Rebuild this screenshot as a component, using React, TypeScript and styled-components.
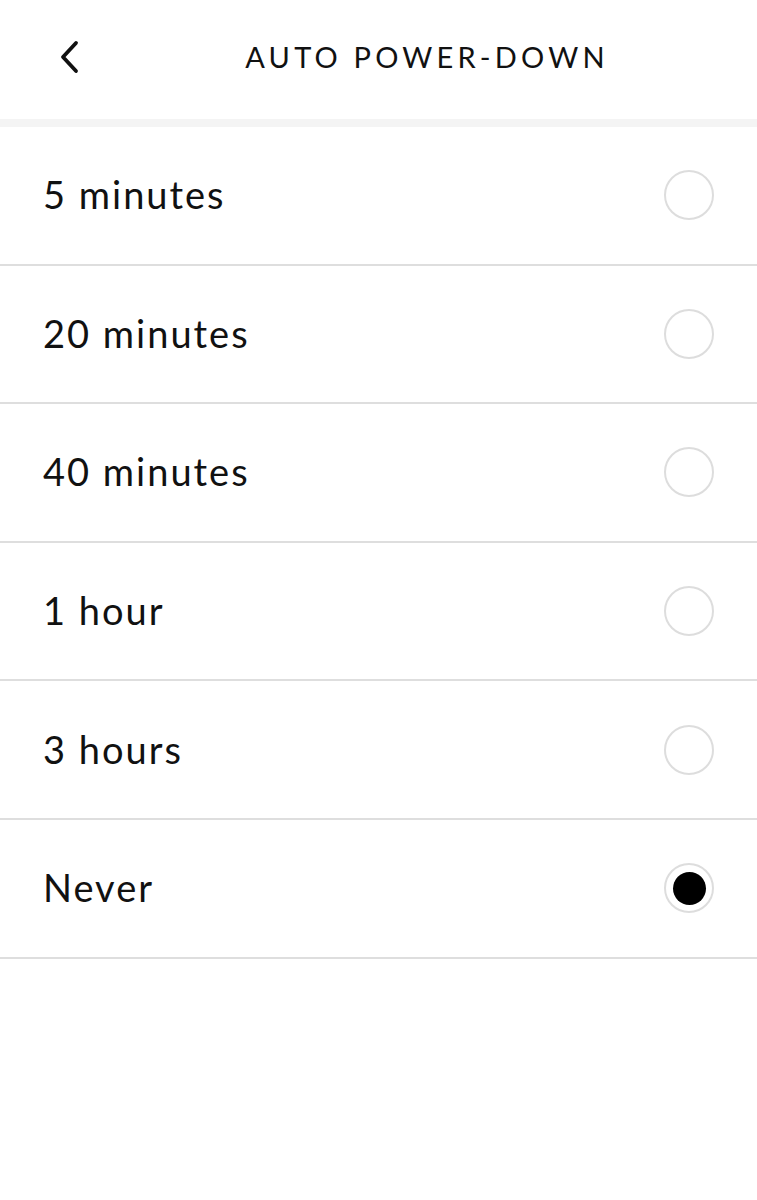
import React, { useState } from "react";
import styled, { createGlobalStyle, css } from "styled-components";

const GlobalStyle = createGlobalStyle`
  html, body {
    margin: 0;
    padding: 0;
    background: #ffffff;
  }

  body {
    font-family: Lato, "Noto Sans", sans-serif;
    color: #111111;
  }
`;

const Screen = styled.div`
  display: flex;
  flex-direction: column;
  width: 757px;
  min-height: 1200px;
  background: #ffffff;
`;

const Header = styled.header`
  display: flex;
  flex-direction: row;
  align-items: center;
  height: 113px;
  padding-bottom: 6px;
  /** thin grey band under the bar */
  border-bottom: 8px solid #f4f4f4;
`;

const BackButton = styled.button`
  display: flex;
  align-items: center;
  justify-content: flex-start;
  flex: none;
  width: 93px;
  height: 60px;
  margin: 0;
  padding: 0 0 0 58px;
  border: none;
  background: transparent;
  color: #111111;
  cursor: pointer;
`;

const Title = styled.h1`
  flex: 1;
  margin: 0 0 0 4px;
  text-align: center;
  font-size: 29px;
  font-weight: 400;
  letter-spacing: 4.2px;
  text-transform: uppercase;
`;

const OptionList = styled.ul`
  display: flex;
  flex-direction: column;
  margin: 0;
  padding: 0;
  list-style: none;
`;

const OptionRow = styled.li`
  display: flex;
  flex-direction: row;
  align-items: center;
  justify-content: space-between;
  height: 136.6px;
  padding: 0 43px;
  border-bottom: 2px solid #dedede;
  cursor: pointer;
`;

const OptionLabel = styled.span`
  margin-top: -2px;
  font-size: 38px;
  font-weight: 400;
  letter-spacing: 2px;
`;

const Radio = styled.span<{ checked?: boolean }>`
  display: flex;
  align-items: center;
  justify-content: center;
  box-sizing: border-box;
  width: 50px;
  height: 50px;
  border: 2px solid #dddddd;
  border-radius: 50%;

  ${({ checked }) =>
    checked &&
    css`
      &::after {
        content: "";
        width: 33px;
        height: 33px;
        border-radius: 50%;
        background: #000000;
      }
    `}
`;

const options = ["5 minutes", "20 minutes", "40 minutes", "1 hour", "3 hours", "Never"];

function ChevronLeft() {
  return (
    <svg width="22" height="34" viewBox="0 0 22 34" fill="none">
      <path
        d="M18 3 L5 17 L18 31"
        stroke="currentColor"
        strokeWidth="3.8"
        strokeLinecap="round"
        strokeLinejoin="round"
      />
    </svg>
  );
}

export default function App() {
  const [selected, setSelected] = useState("Never");

  return (
    <Screen>
      <GlobalStyle />
      <Header>
        <BackButton aria-label="Back">
          <ChevronLeft />
        </BackButton>
        <Title>Auto Power-Down</Title>
      </Header>
      <OptionList>
        {options.map((option) => (
          <OptionRow key={option} onClick={() => setSelected(option)}>
            <OptionLabel>{option}</OptionLabel>
            <Radio checked={selected === option} />
          </OptionRow>
        ))}
      </OptionList>
    </Screen>
  );
}
